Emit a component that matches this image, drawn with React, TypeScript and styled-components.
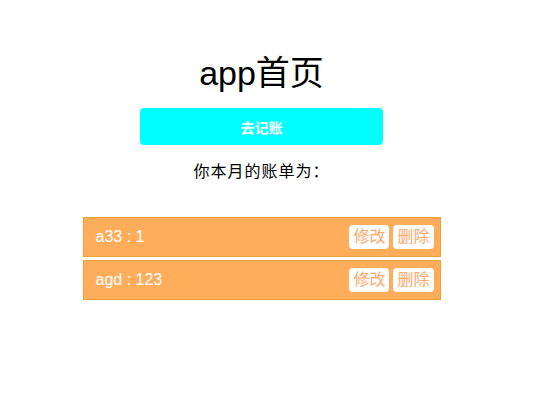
import React from "react";
import styled, { createGlobalStyle } from "styled-components";

const Global = createGlobalStyle`
  html, body { margin: 0; padding: 0; background: #fff; }
  body { font-family: "Liberation Sans", "Noto Sans CJK SC", sans-serif; }
`;

const Page = styled.div`
  width: 523px;
  display: flex;
  flex-direction: column;
  align-items: center;
  padding-top: 54px;
`;

const Title = styled.h1`
  margin: 0;
  font-size: 34px;
  line-height: 38px;
  font-weight: normal;
  color: #000;
`;

const AddButton = styled.button`
  margin-top: 16px;
  width: 243px;
  height: 37px;
  border: none;
  border-radius: 4px;
  background: #00ffff;
  color: #fff;
  font-family: inherit;
  font-size: 14px;
  font-weight: bold;
  cursor: pointer;
`;

const Summary = styled.p`
  margin: 16px 0 0;
  font-size: 16px;
  letter-spacing: 1px;
  line-height: 22px;
  color: #000;
`;

const List = styled.ul`
  list-style: none;
  margin: 34px 0 0;
  padding: 0;
  width: 358px;
  display: flex;
  flex-direction: column;
  gap: 3px;
`;

const Row = styled.li`
  box-sizing: border-box;
  height: 40px;
  display: flex;
  align-items: center;
  justify-content: space-between;
  padding: 0 6px 0 12px;
  background: #ffad5b;
  border: 1px solid #e6a23c;
  color: #fff;
  font-size: 16px;
`;

const Actions = styled.div`
  display: flex;
  gap: 4px;
`;

const SmallButton = styled.button`
  height: 24px;
  padding: 0 4px;
  border: none;
  border-radius: 4px;
  background: #fff;
  color: #ffa86a;
  font-family: inherit;
  font-size: 16px;
  line-height: 24px;
  cursor: pointer;
`;

const bills = [
  { name: "a33", amount: 1 },
  { name: "agd", amount: 123 },
];

export default function App() {
  return (
    <>
      <Global />
      <Page>
        <Title>app首页</Title>
        <AddButton>去记账</AddButton>
        <Summary>你本月的账单为：</Summary>
        <List>
          {bills.map((b) => (
            <Row key={b.name}>
              <span>
                {b.name} : {b.amount}
              </span>
              <Actions>
                <SmallButton>修改</SmallButton>
                <SmallButton>删除</SmallButton>
              </Actions>
            </Row>
          ))}
        </List>
      </Page>
    </>
  );
}
